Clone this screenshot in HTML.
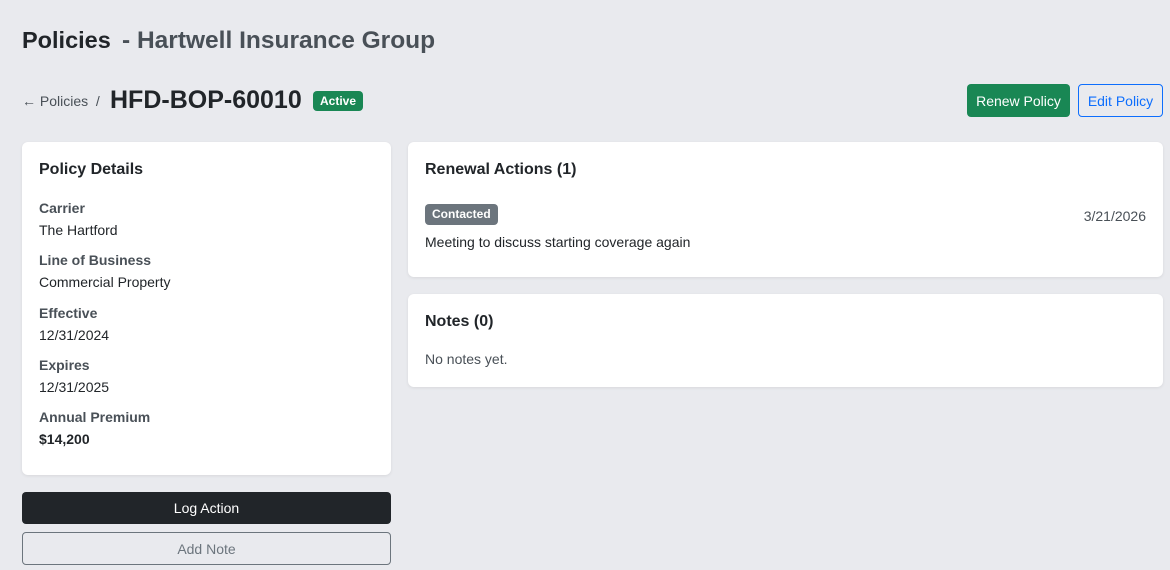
<!DOCTYPE html>
<html><head><meta charset="utf-8"><style>
*{box-sizing:border-box;margin:0;padding:0}
body{width:1170px;height:570px;background:#e9eaee;font-family:"Liberation Sans",sans-serif;color:#212529;position:relative;overflow:hidden}
.a{position:absolute;white-space:nowrap}
.card{position:absolute;background:#fff;border-radius:6px;box-shadow:0 1px 3px rgba(0,0,0,.08)}
.h{font-weight:bold;font-size:16px;color:#212529}
.lbl{font-weight:bold;font-size:14px;color:#495057}
.val{font-size:14px;color:#212529}
.btn{position:absolute;border-radius:4px;font-size:14px;display:flex;align-items:center;justify-content:center}
</style></head><body>
<div class="a" style="left:22px;top:27px;font-size:23.5px;font-weight:bold">Policies</div>
<div class="a" style="left:122px;top:27px;font-size:24.5px;font-weight:bold;color:#495057">- Hartwell Insurance Group</div>
<div class="a" style="left:22px;top:93px;font-size:14px;color:#495057">← Policies &nbsp;/</div>
<div class="a" style="left:110px;top:86px;font-size:25px;font-weight:bold">HFD-BOP-60010</div>
<div class="a" style="left:313px;top:91px;height:20px;padding:0 7px;background:#198754;color:#fff;border-radius:4px;font-size:12px;font-weight:bold;line-height:20px">Active</div>
<div class="btn" style="left:967px;top:84px;width:103px;height:33px;background:#198754;color:#fff">Renew Policy</div>
<div class="btn" style="left:1078px;top:84px;width:85px;height:33px;border:1px solid #0d6efd;color:#0d6efd">Edit Policy</div>

<div class="card" style="left:22px;top:142px;width:369px;height:333px">
<div class="a h" style="left:17px;top:19px">Policy Details</div>
<div class="a lbl" style="left:17px;top:58px">Carrier</div>
<div class="a val" style="left:17px;top:80px">The Hartford</div>
<div class="a lbl" style="left:17px;top:110px">Line of Business</div>
<div class="a val" style="left:17px;top:132px">Commercial Property</div>
<div class="a lbl" style="left:17px;top:163px">Effective</div>
<div class="a val" style="left:17px;top:185px">12/31/2024</div>
<div class="a lbl" style="left:17px;top:215px">Expires</div>
<div class="a val" style="left:17px;top:237px">12/31/2025</div>
<div class="a lbl" style="left:17px;top:267px">Annual Premium</div>
<div class="a val" style="left:17px;top:289px;font-weight:bold">$14,200</div>
</div>

<div class="card" style="left:408px;top:142px;width:755px;height:135px">
<div class="a h" style="left:17px;top:19px">Renewal Actions (1)</div>
<div class="a" style="left:17px;top:62px;height:21px;padding:0 7px;background:#6c757d;color:#fff;border-radius:4px;font-size:12px;font-weight:bold;line-height:21px">Contacted</div>
<div class="a" style="right:17px;top:66px;font-size:14px;color:#495057">3/21/2026</div>
<div class="a val" style="left:17px;top:92px">Meeting to discuss starting coverage again</div>
</div>

<div class="card" style="left:408px;top:294px;width:755px;height:93px">
<div class="a h" style="left:17px;top:19px">Notes (0)</div>
<div class="a" style="left:17px;top:57px;font-size:14px;color:#495057">No notes yet.</div>
</div>

<div class="btn" style="left:22px;top:492px;width:369px;height:32px;background:#212529;color:#fff">Log Action</div>
<div class="btn" style="left:22px;top:532px;width:369px;height:33px;border:1px solid #6c757d;color:#6c757d">Add Note</div>
</body></html>
